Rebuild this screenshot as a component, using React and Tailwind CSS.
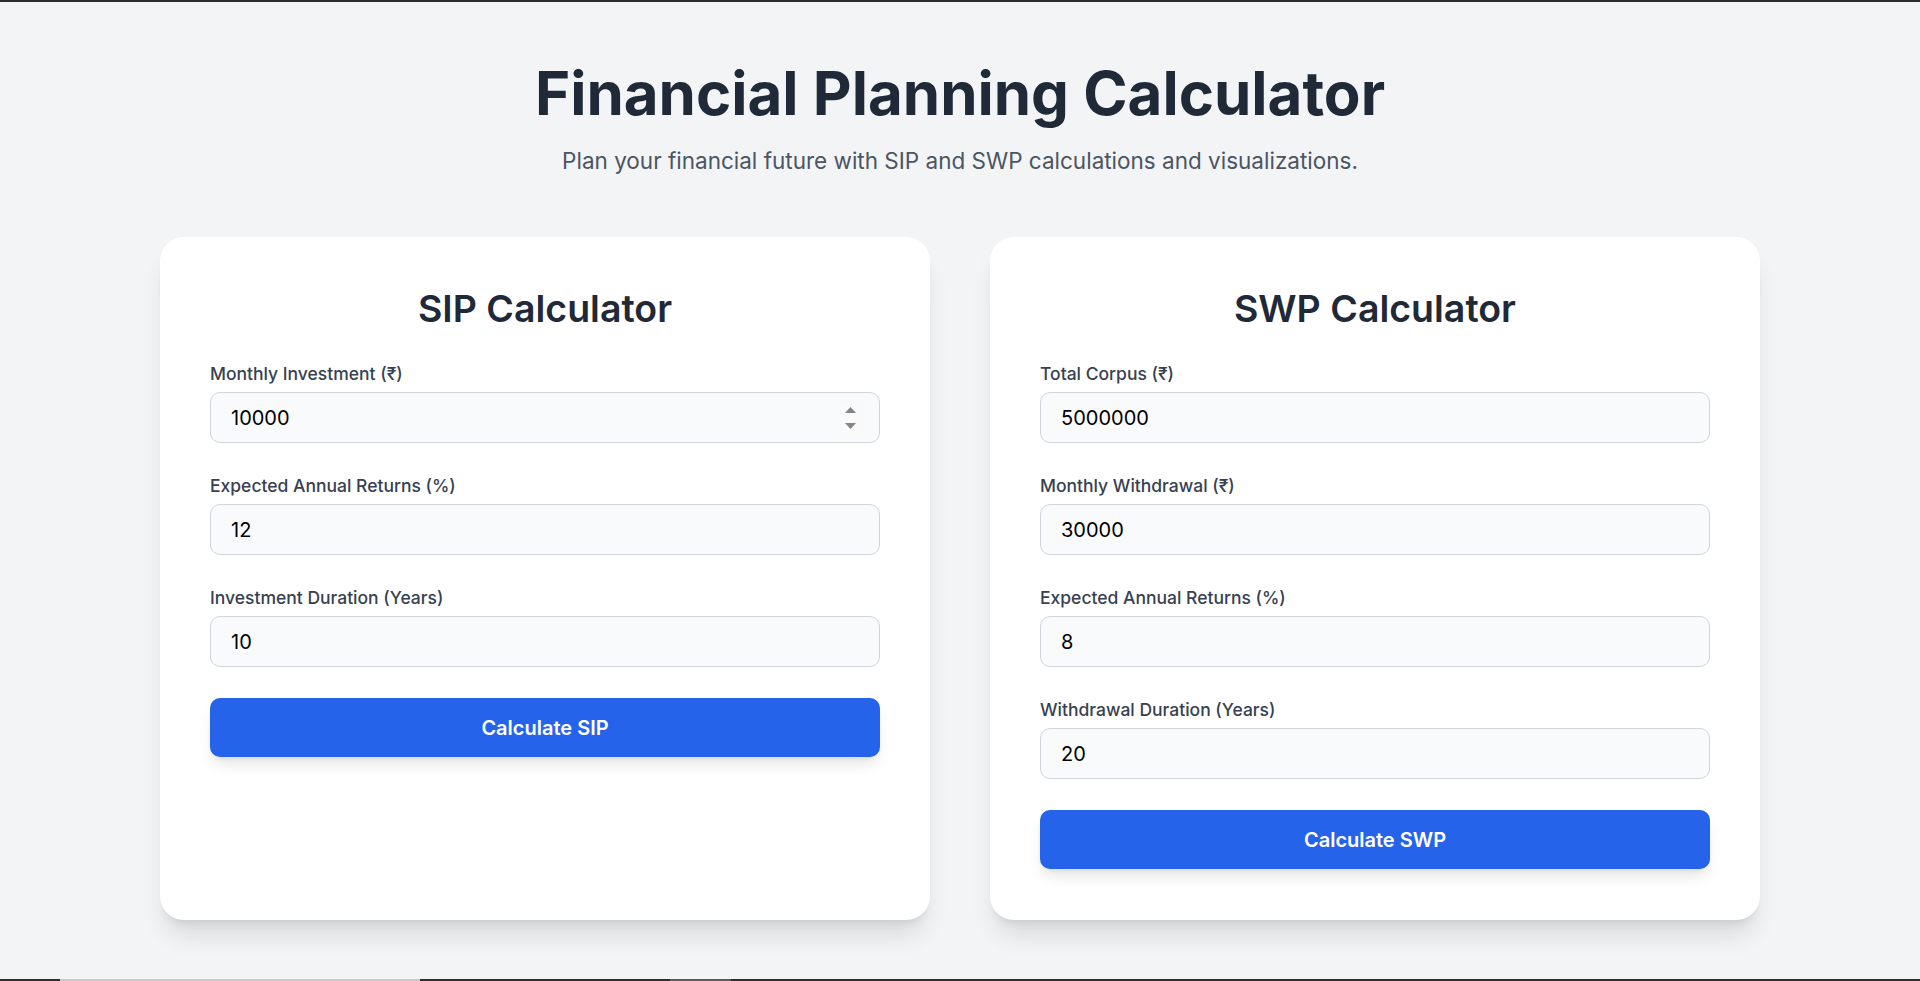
import React from "react";

const sipFields = [
  { label: "Monthly Investment (₹)", value: "10000", spinner: true },
  { label: "Expected Annual Returns (%)", value: "12" },
  { label: "Investment Duration (Years)", value: "10" },
];

const swpFields = [
  { label: "Total Corpus (₹)", value: "5000000" },
  { label: "Monthly Withdrawal (₹)", value: "30000" },
  { label: "Expected Annual Returns (%)", value: "8" },
  { label: "Withdrawal Duration (Years)", value: "20" },
];

const Field = ({ label, value, spinner }) => (
  <div>
    <label className="block text-[17.5px] leading-5 font-medium text-[#374151] mb-2">{label}</label>
    <div className="relative">
      <input
        type="text"
        defaultValue={value}
        className="w-full h-[51px] px-5 rounded-[10px] border border-[#d1d5db] bg-[#f9fafb] text-xl text-black outline-none"
      />
      {spinner && (
        // number input spin buttons, shown on hover
        <div className="absolute right-[21px] top-[11px] w-[18px] h-[30px] bg-[#fbfbfc] flex flex-col items-center justify-center gap-[10px]">
          <svg width="11" height="6" viewBox="0 0 11 6"><path d="M5.5 0L11 6H0z" fill="#858585" /></svg>
          <svg width="11" height="6" viewBox="0 0 11 6"><path d="M0 0h11L5.5 6z" fill="#858585" /></svg>
        </div>
      )}
    </div>
  </div>
);

const CalcCard = ({ title, fields, button }) => (
  <div className="bg-white rounded-3xl shadow-xl px-[50px] pt-[52px] pb-[51px]">
    <h2 className="text-[37.5px] leading-10 font-semibold text-[#1f2937] text-center mb-[35px]">{title}</h2>
    <div className="flex flex-col gap-[33px]">
      {fields.map((f) => (
        <Field key={f.label} {...f} />
      ))}
    </div>
    <button className="mt-[31px] w-full h-[59px] rounded-[10px] bg-[#2563eb] text-white text-xl font-semibold shadow-lg">
      {button}
    </button>
  </div>
);

export default function App() {
  return (
    <div className="h-[981px] flex flex-col bg-[#f3f4f6] font-['Inter',sans-serif] overflow-hidden">
      <div className="h-[2px] bg-[#2d2d2d]" />
      <main className="flex-1 px-40 pt-[61px]">
        <div className="text-center mb-[62px]">
          <h1 className="text-6xl leading-none font-bold text-[#1f2937] mb-6">Financial Planning Calculator</h1>
          <p className="text-[22.5px] leading-7 text-[#4b5563]">Plan your financial future with SIP and SWP calculations and visualizations.</p>
        </div>
        <div className="grid grid-cols-2 gap-15 items-stretch">
          <CalcCard title="SIP Calculator" fields={sipFields} button="Calculate SIP" />
          <CalcCard title="SWP Calculator" fields={swpFields} button="Calculate SWP" />
        </div>
      </main>
      <div className="h-[2px] flex">
        <div className="w-[60px] bg-[#2d2d2d]" />
        <div className="w-[360px] bg-[#c8c8c8]" />
        <div className="w-[250px] bg-[#2d2d2d]" />
        <div className="w-[61px] bg-[#5a5a5a]" />
        <div className="flex-1 bg-[#2d2d2d]" />
      </div>
    </div>
  );
}
